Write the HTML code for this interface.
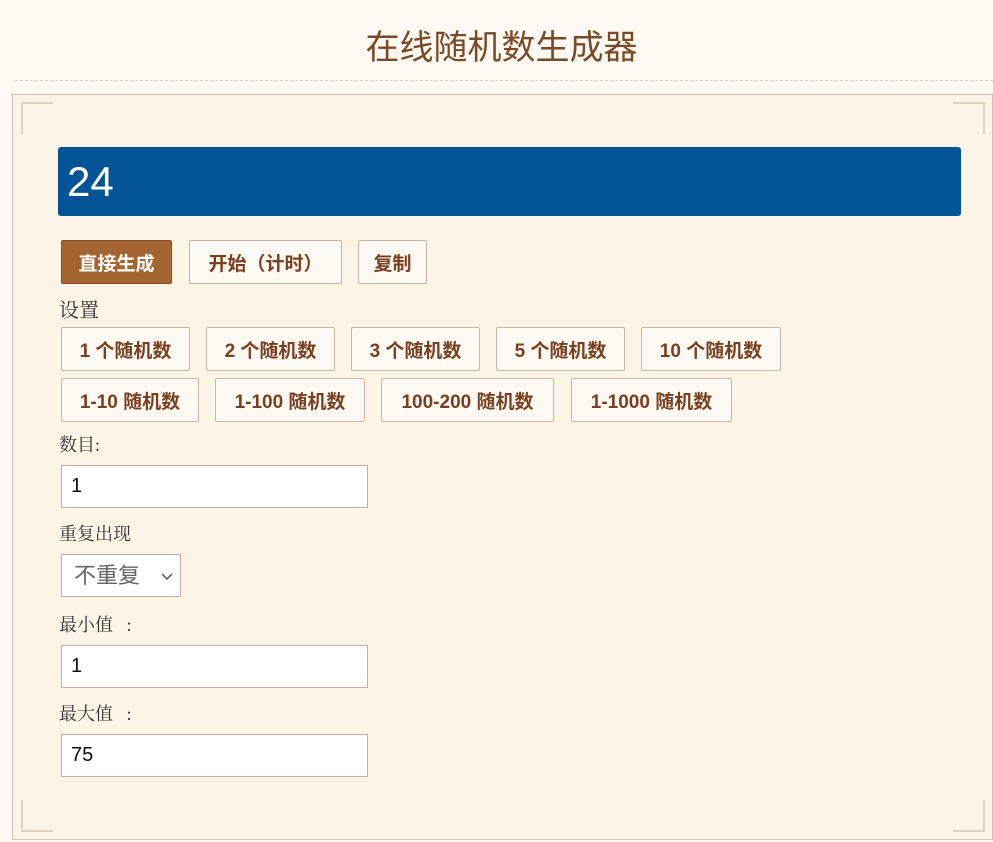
<!DOCTYPE html>
<html><head><meta charset="utf-8"><style>
body{margin:0;width:993px;height:842px;background:#fefaf3;font-family:"Liberation Sans","Noto Sans CJK SC",sans-serif;position:relative;overflow:hidden}
.t{position:absolute;top:26px;left:0;width:1003px;text-align:center;font-size:34px;color:#7a4a26;line-height:44px}
.dash{position:absolute;top:80px;left:15px;right:0;border-top:1px dashed #e5cfc0}
.box{position:absolute;left:12px;top:94px;width:979px;height:744px;border:1px solid #d8bfae;background:#fcf4e6}
.res{position:absolute;left:58px;top:147px;width:903px;height:69px;background:#035496;border-radius:3px;color:#fff;font-size:42px;line-height:69px;padding-left:9px;box-sizing:border-box}
.b{position:absolute;height:44px;box-sizing:border-box;border:1px solid #cdb5a5;border-radius:2px;background:#fdf9f3;color:#7a3f1e;font-weight:bold;font-size:19px;line-height:48px;text-align:center}
.lab{position:absolute;left:59px;font-size:18px;color:#333;font-family:"Liberation Serif","Noto Serif CJK SC",serif}
.in{position:absolute;left:61px;width:307px;height:43px;box-sizing:border-box;border:1px solid #c6ada0;background:#fff;font-size:20px;line-height:41px;padding-left:9px;color:#111}
.c{position:absolute;width:30px;height:30px;border-color:#e2d2c2;border-style:solid;border-width:0}
</style></head><body>
<div class="t">在线随机数生成器</div>
<div class="dash"></div>
<div class="box"></div>
<div class="c" style="left:21px;top:102px;border-left-width:2px;border-top-width:2px"></div>
<div class="c" style="left:953px;top:102px;border-right-width:2px;border-top-width:2px"></div>
<div class="c" style="left:21px;top:800px;border-left-width:2px;border-bottom-width:2px"></div>
<div class="c" style="left:953px;top:800px;border-right-width:2px;border-bottom-width:2px"></div>
<div class="res">24</div>
<div class="b" style="left:61px;top:240px;width:111px;background:#a56532;border-color:#8a5026;color:#fff">直接生成</div>
<div class="b" style="left:189px;top:240px;width:153px">开始（计时）</div>
<div class="b" style="left:358px;top:240px;width:69px">复制</div>
<div class="lab" style="top:294px;font-size:20px">设置</div>
<div class="b" style="left:61px;top:327px;width:129px">1 个随机数</div>
<div class="b" style="left:206px;top:327px;width:129px">2 个随机数</div>
<div class="b" style="left:351px;top:327px;width:129px">3 个随机数</div>
<div class="b" style="left:496px;top:327px;width:129px">5 个随机数</div>
<div class="b" style="left:641px;top:327px;width:140px">10 个随机数</div>
<div class="b" style="left:61px;top:378px;width:138px">1-10 随机数</div>
<div class="b" style="left:215px;top:378px;width:150px">1-100 随机数</div>
<div class="b" style="left:381px;top:378px;width:173px">100-200 随机数</div>
<div class="b" style="left:571px;top:378px;width:161px">1-1000 随机数</div>
<div class="lab" style="top:431px">数目:</div>
<div class="in" style="top:465px">1</div>
<div class="lab" style="top:520px">重复出现</div>
<div class="in" style="top:554px;width:120px;color:#666;font-size:22px;padding-left:12px">不重复<svg width="12" height="8" style="position:absolute;left:99px;top:18px"><path d="M1 1 L6 6 L11 1" fill="none" stroke="#555" stroke-width="1.5"/></svg></div>
<div class="lab" style="top:611px">最小值 &nbsp; :</div>
<div class="in" style="top:645px">1</div>
<div class="lab" style="top:700px">最大值 &nbsp; :</div>
<div class="in" style="top:734px">75</div>
</body></html>
